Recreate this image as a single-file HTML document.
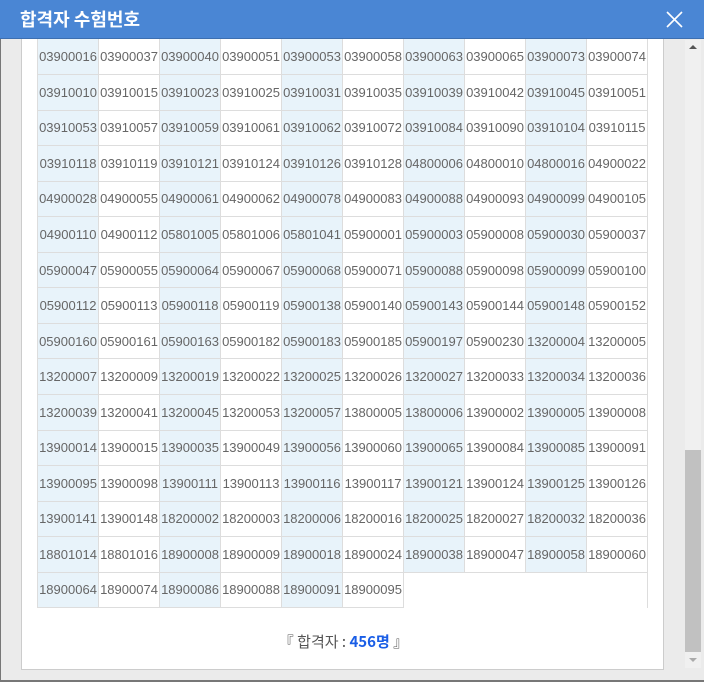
<!DOCTYPE html>
<html><head><meta charset="utf-8"><style>
*{margin:0;padding:0;box-sizing:border-box}
body{width:704px;height:682px;overflow:hidden;background:#ebebeb;font-family:"Liberation Sans","Noto Sans CJK KR",sans-serif;position:relative}
.outer{position:absolute;left:0;top:0;width:704px;height:682px;border-left:1px solid #777;border-bottom:2px solid #777}
.hdr{position:absolute;left:0;top:0;width:704px;height:39px;background:#4a86d4;border-bottom:1px solid #3d6fb0}
.hdr h1{position:absolute;left:20px;top:7px;font-size:18px;color:#fff;font-weight:bold;font-family:"Noto Sans CJK KR",sans-serif;line-height:24px}
.x{position:absolute;left:666px;top:11px}
.panel{position:absolute;left:21px;top:39px;width:643px;height:631px;background:#fff;border:1px solid #ccc;border-top:none}
table{position:absolute;left:15px;top:0;border-collapse:collapse}
td{width:61px;height:35.55px;border:1px solid #ddd;border-top:none;font-size:13px;color:#666;text-align:center;padding:0;white-space:nowrap;letter-spacing:0}
td:nth-child(odd){background:#e8f3fa}
td.e{background:#fff;border:none}
.foot{position:absolute;left:0;width:643px;top:592px;text-align:center;font-size:15px;color:#555;font-weight:normal;font-family:"Noto Sans CJK KR",sans-serif}
.foot b{color:#1a5ee6;font-weight:bold}
.sb{position:absolute;left:685px;top:40px;width:16px;height:628px;background:#f0f0f0}
.th{position:absolute;left:0;top:410px;width:16px;height:202px;background:#c1c1c1}
</style></head><body>
<div class="outer"></div>
<div class="panel">
<table id="t"></table>
<div class="foot">『 합격자 : <b>456명</b> 』</div>
</div>
<div class="sb"><div style="position:absolute;left:4px;top:5px;border-left:4px solid transparent;border-right:4px solid transparent;border-bottom:4px solid #555"></div><div class="th"></div><div style="position:absolute;left:4px;top:618px;border-left:4px solid transparent;border-right:4px solid transparent;border-top:4px solid #aaa"></div></div>
<div class="hdr"><h1>합격자 수험번호</h1>
<svg class="x" width="17" height="17" viewBox="0 0 17 17"><path d="M1 1L16 16M16 1L1 16" stroke="#fff" stroke-width="1.6"/></svg></div>
<script>
var d="03900016 03900037 03900040 03900051 03900053 03900058 03900063 03900065 03900073 03900074 03910010 03910015 03910023 03910025 03910031 03910035 03910039 03910042 03910045 03910051 03910053 03910057 03910059 03910061 03910062 03910072 03910084 03910090 03910104 03910115 03910118 03910119 03910121 03910124 03910126 03910128 04800006 04800010 04800016 04900022 04900028 04900055 04900061 04900062 04900078 04900083 04900088 04900093 04900099 04900105 04900110 04900112 05801005 05801006 05801041 05900001 05900003 05900008 05900030 05900037 05900047 05900055 05900064 05900067 05900068 05900071 05900088 05900098 05900099 05900100 05900112 05900113 05900118 05900119 05900138 05900140 05900143 05900144 05900148 05900152 05900160 05900161 05900163 05900182 05900183 05900185 05900197 05900230 13200004 13200005 13200007 13200009 13200019 13200022 13200025 13200026 13200027 13200033 13200034 13200036 13200039 13200041 13200045 13200053 13200057 13800005 13800006 13900002 13900005 13900008 13900014 13900015 13900035 13900049 13900056 13900060 13900065 13900084 13900085 13900091 13900095 13900098 13900111 13900113 13900116 13900117 13900121 13900124 13900125 13900126 13900141 13900148 18200002 18200003 18200006 18200016 18200025 18200027 18200032 18200036 18801014 18801016 18900008 18900009 18900018 18900024 18900038 18900047 18900058 18900060 18900064 18900074 18900086 18900088 18900091 18900095".split(" ");
var h="";for(var r=0;r<16;r++){h+="<tr>";for(var c=0;c<10;c++){var v=d[r*10+c];h+=v?"<td>"+v+"</td>":(c==9?'<td class="e" style="border-right:1px solid #ddd"></td>':'<td class="e"></td>');}h+="</tr>";}
document.getElementById("t").innerHTML=h;
</script>
</body></html>
